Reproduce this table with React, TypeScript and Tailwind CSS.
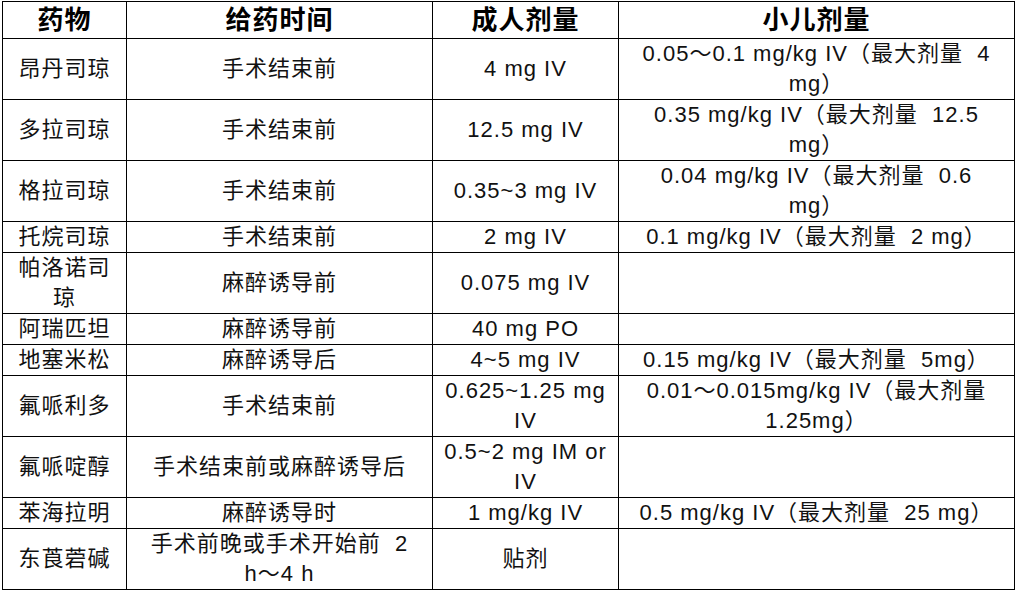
const ROWS: [string[], string[], string[], string[]][] = [
  [['昂丹司琼'], ['手术结束前'], ['4 mg IV'], ['0.05～0.1 mg/kg IV（最大剂量  4', 'mg）']],
  [['多拉司琼'], ['手术结束前'], ['12.5 mg IV'], ['0.35 mg/kg IV（最大剂量  12.5', 'mg）']],
  [['格拉司琼'], ['手术结束前'], ['0.35~3 mg IV'], ['0.04 mg/kg IV（最大剂量  0.6', 'mg）']],
  [['托烷司琼'], ['手术结束前'], ['2 mg IV'], ['0.1 mg/kg IV（最大剂量  2 mg）']],
  [['帕洛诺司', '琼'], ['麻醉诱导前'], ['0.075 mg IV'], []],
  [['阿瑞匹坦'], ['麻醉诱导前'], ['40 mg PO'], []],
  [['地塞米松'], ['麻醉诱导后'], ['4~5 mg IV'], ['0.15 mg/kg IV（最大剂量  5mg）']],
  [['氟哌利多'], ['手术结束前'], ['0.625~1.25 mg', 'IV'], ['0.01～0.015mg/kg IV（最大剂量', '1.25mg）']],
  [['氟哌啶醇'], ['手术结束前或麻醉诱导后'], ['0.5~2 mg IM or', 'IV'], []],
  [['苯海拉明'], ['麻醉诱导时'], ['1 mg/kg IV'], ['0.5 mg/kg IV（最大剂量  25 mg）']],
  [['东莨菪碱'], ['手术前晚或手术开始前  2', 'h～4 h'], ['贴剂'], []],
];

const HEAD = ['药物', '给药时间', '成人剂量', '小儿剂量'];

function Lines({ lines }: { lines: string[] }) {
  if (lines.length === 0) return <span>&nbsp;</span>;
  return (
    <>
      {lines.map((l, i) => (
        <div key={i} className="whitespace-pre">{l}</div>
      ))}
    </>
  );
}

export default function App() {
  return (
    <div
      className="bg-white text-black w-[1016px] h-[592px] pt-px pl-[2px]"
      style={{ fontFamily: "'Liberation Sans', 'Noto Sans CJK SC', sans-serif" }}
    >
      <table className="border-collapse table-fixed w-[1012px]">
        <colgroup>
          <col className="w-[124px]" />
          <col className="w-[306px]" />
          <col className="w-[186px]" />
          <col className="w-[396px]" />
        </colgroup>
        <thead>
          <tr>
            {HEAD.map(h => (
              <th key={h} className="border border-black p-0 text-center align-middle text-[26px] leading-[36px] font-bold tracking-[1px]">
                {h}
              </th>
            ))}
          </tr>
        </thead>
        <tbody>
          {ROWS.map((r, i) => (
            <tr key={i}>
              {r.map((c, j) => (
                <td key={j} className="border border-black p-0 text-center align-middle text-[22px] leading-[30px] tracking-[1px] text-[#111]">
                  <Lines lines={c} />
                </td>
              ))}
            </tr>
          ))}
        </tbody>
      </table>
    </div>
  );
}
